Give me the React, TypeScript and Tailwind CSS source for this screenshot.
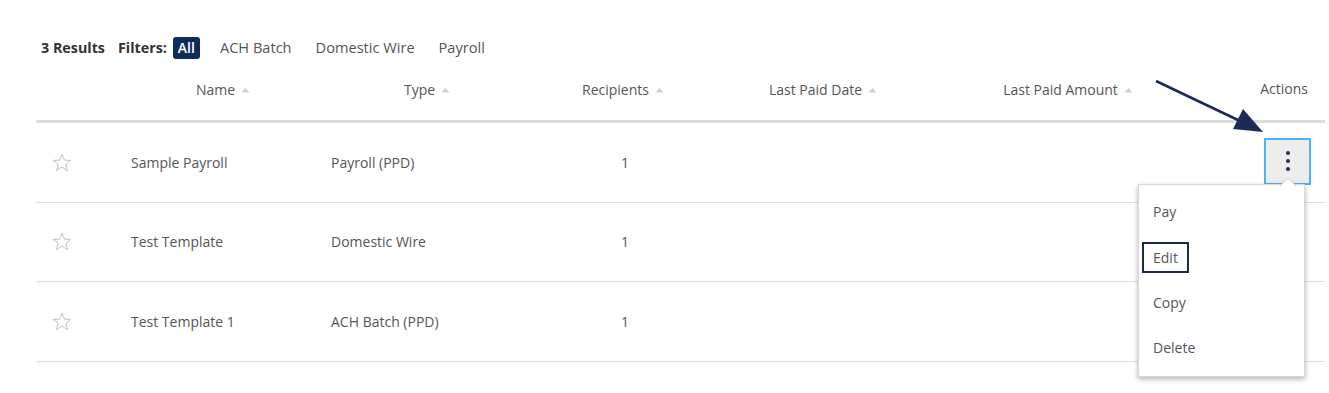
import React from "react";

const font = { fontFamily: '"Open Sans", "Noto Sans", Arial, sans-serif' };

function SortCaret() {
  return (
    <svg width="9" height="6" viewBox="0 0 9 6" className="ml-[6px] inline-block">
      <path d="M0.5 5.5 L4.5 1 L8.5 5.5 Z" fill="#cfcfcf" />
    </svg>
  );
}

function Star() {
  return (
    <svg width="20" height="19" viewBox="0 0 24 23">
      <path
        d="M12 1.5 L14.9 8.6 L22.5 9 L16.6 13.9 L18.6 21.3 L12 17.1 L5.4 21.3 L7.4 13.9 L1.5 9 L9.1 8.6 Z"
        fill="none"
        stroke="#b9b9b9"
        strokeWidth="1.1"
        strokeLinejoin="round"
      />
    </svg>
  );
}

const rows = [
  { name: "Sample Payroll", type: "Payroll (PPD)", rec: "1", active: true },
  { name: "Test Template", type: "Domestic Wire", rec: "1" },
  { name: "Test Template 1", type: "ACH Batch (PPD)", rec: "1" },
];

export default function App() {
  return (
    <div className="relative w-[1329px] h-[393px] bg-white overflow-hidden text-[#555]" style={font}>
      <div className="pl-[36px] pr-[4px] pt-[36px]">
        {/* Filter bar */}
        <div className="flex items-center h-[23px] pl-[5px]">
          <span className="text-[14.3px] font-bold text-[#333]">3 Results</span>
          <span className="ml-[13px] text-[14.3px] font-bold text-[#333]">Filters:</span>
          <span className="ml-[6px] h-[22px] px-[5px] flex items-center rounded-[3px] bg-[#0c2c5c] text-white text-[14px] font-semibold">
            All
          </span>
          <span className="ml-[20px] text-[14.6px] text-[#555]">ACH Batch</span>
          <span className="ml-[24px] text-[14.6px] text-[#555]">Domestic Wire</span>
          <span className="ml-[24px] text-[14.6px] text-[#555]">Payroll</span>
        </div>

        {/* Header */}
        <div className="flex items-center h-[61px] text-[14px] text-[#555]">
          <div className="w-[95px]" />
          <div className="w-[184px] flex items-center justify-center">Name<SortCaret /></div>
          <div className="w-[224px] flex items-center justify-center">Type<SortCaret /></div>
          <div className="w-[168px] flex items-center justify-center">Recipients<SortCaret /></div>
          <div className="w-[232px] flex items-center justify-center">Last Paid Date<SortCaret /></div>
          <div className="w-[258px] flex items-center justify-center">Last Paid Amount<SortCaret /></div>
          <div className="flex-1 flex items-center justify-end pr-[17px] mt-[-2px]">Actions</div>
        </div>
        <div className="h-[3px] bg-[#dcdcdc]" />

        {/* Rows */}
        {rows.map((r, i) => (
          <div key={i} className="flex items-center h-[79.5px] border-b border-[#dedede] text-[14px] text-[#555]">
            <div className="w-[95px] flex items-center pl-[16px]">
              <Star />
            </div>
            <div className="w-[200px]">{r.name}</div>
            <div className="w-[194px]">{r.type}</div>
            <div className="w-[200px] text-center">{r.rec}</div>
            <div className="w-[204px]" />
            <div className="w-[282px]" />
            <div className="flex-1 flex justify-end pr-[14px]">
              {r.active ? (
                <div className="w-[47px] h-[47px] mt-[-2px] border-2 border-[#4db3f5] bg-[#ededed] flex flex-col items-center justify-center gap-[4px]">
                  <span className="w-[4px] h-[4px] rounded-full bg-[#1a2a52]" />
                  <span className="w-[4px] h-[4px] rounded-full bg-[#1a2a52]" />
                  <span className="w-[4px] h-[4px] rounded-full bg-[#1a2a52]" />
                </div>
              ) : (
                <div className="w-[47px] h-[47px]" />
              )}
            </div>
          </div>
        ))}
      </div>

      {/* Dropdown menu */}
      <div className="absolute left-[1138px] top-[184px] w-[167px] h-[193px] bg-white border border-[#d8d8d8] shadow-[0_2px_5px_rgba(0,0,0,0.3)] text-[14px] text-[#555]">
        <svg width="16" height="9" viewBox="0 0 16 9" className="absolute left-[141px] top-[-8px]">
          <path d="M0 9 L8 1 L16 9" fill="white" stroke="#d0d0d0" strokeWidth="1" />
        </svg>
        <div className="flex flex-col pt-[14px] pl-[3px]">
          <div className="h-[45px] flex items-start pl-[11px] pt-[2px]">Pay</div>
          <div className="h-[45px] flex items-start">
            <span className="mt-[-2px] border-2 border-[#1a2a52] px-[9px] h-[31px] flex items-center">Edit</span>
          </div>
          <div className="h-[45px] flex items-start pl-[11px] pt-[3px]">Copy</div>
          <div className="h-[45px] flex items-start pl-[11px] pt-[3px]">Delete</div>
        </div>
      </div>

      {/* Annotation arrow */}
      <svg className="absolute left-0 top-0 pointer-events-none" width="1329" height="393">
        <line x1="1156" y1="81" x2="1240" y2="121" stroke="#1b2a57" strokeWidth="2.5" />
        <path d="M1263 132 L1233 129 L1243 109 Z" fill="#1b2a57" />
      </svg>
    </div>
  );
}
